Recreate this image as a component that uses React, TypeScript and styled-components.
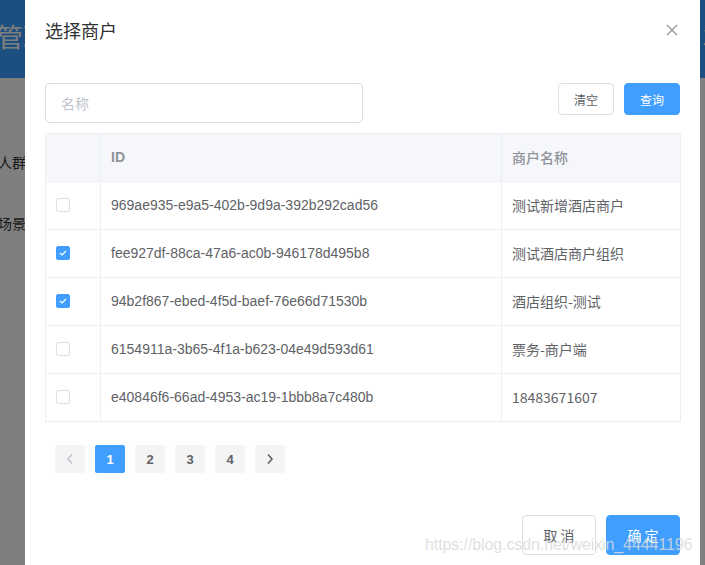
import React from "react";
import styled, { createGlobalStyle } from "styled-components";

const Global = createGlobalStyle`
  html, body { margin: 0; padding: 0; }
  body {
    width: 705px;
    height: 565px;
    overflow: hidden;
    font-family: "Liberation Sans", "Noto Sans CJK SC", sans-serif;
    background: #ffffff;
  }
  * { box-sizing: border-box; }
`;

const Page = styled.div`
  position: relative;
  width: 705px;
  height: 565px;
  overflow: hidden;
  background: #ffffff;
`;

const TopBar = styled.div`
  height: 78px;
  background: #389eff;
  display: flex;
  align-items: center;
  justify-content: space-between;
  color: #ffffff;
  font-family: "Noto Sans CJK SC", sans-serif;
`;

const BrandTitle = styled.div`
  font-size: 26px;
  margin-left: -3px;
  margin-top: -8px;
  white-space: nowrap;
`;

const TopRight = styled.div`
  font-size: 22px;
  margin-right: -9px;
  margin-top: -8px;
`;

const FormCol = styled.div`
  display: flex;
  flex-direction: column;
  gap: 41px;
  padding-top: 74px;
  width: 30px;
`;

const BgLabel = styled.div`
  font-family: "Noto Sans CJK SC", sans-serif;
  font-size: 14px;
  color: #333;
  white-space: nowrap;
  direction: rtl;
  text-align: left;
  width: 26px;
`;

const Overlay = styled.div`
  position: absolute;
  inset: 0;
  background: rgba(0, 0, 0, 0.5);
`;

const Dialog = styled.div`
  position: absolute;
  left: 25px;
  top: 0;
  width: 675px;
  height: 580px;
  background: #ffffff;
  display: flex;
  flex-direction: column;
`;

const DialogHeader = styled.div`
  position: relative;
  padding: 18px 20px 10px;
  height: 54px;
`;

const Title = styled.div`
  font-family: "Noto Sans CJK SC", sans-serif;
  font-size: 18px;
  line-height: 24px;
  color: #303133;
`;

const CloseBtn = styled.div`
  position: absolute;
  top: 24px;
  right: 22px;
  width: 12px;
  height: 12px;
  display: flex;
`;

const DialogBody = styled.div`
  padding: 29px 20px 0;
`;

const SearchRow = styled.div`
  display: flex;
  align-items: flex-start;
  justify-content: space-between;
`;

const SearchInput = styled.div`
  width: 318px;
  height: 40px;
  border: 1px solid #dcdfe6;
  border-radius: 4px;
  padding: 0 15px;
  display: flex;
  align-items: center;
  font-family: "Noto Sans CJK SC", sans-serif;
  font-size: 14px;
  color: #c0c4cc;
`;

const BtnGroup = styled.div`
  display: flex;
  gap: 10px;
`;

const Btn = styled.div<{ $primary?: boolean; $size?: "small" | "default" }>`
  height: ${(p) => (p.$size === "small" ? "32px" : "40px")};
  width: ${(p) => (p.$size === "small" ? "56px" : "74px")};
  border-radius: 4px;
  display: flex;
  align-items: center;
  justify-content: center;
  font-family: "Noto Sans CJK SC", sans-serif;
  font-size: ${(p) => (p.$size === "small" ? "12px" : "14px")};
  white-space: pre;
  border: 1px solid ${(p) => (p.$primary ? "#409eff" : "#dcdfe6")};
  background: ${(p) => (p.$primary ? "#409eff" : "#ffffff")};
  color: ${(p) => (p.$primary ? "#ffffff" : "#606266")};
`;

const Table = styled.div`
  margin-top: 10px;
  border: 1px solid #ebeef5;
  border-right: none;
  border-bottom: none;
  display: grid;
  grid-template-columns: 55px 401px 179px;
  width: 635px;
`;

const Cell = styled.div<{ $head?: boolean }>`
  height: 48px;
  border-right: 1px solid #ebeef5;
  border-bottom: 1px solid #ebeef5;
  background: ${(p) => (p.$head ? "#f5f7fa" : "#ffffff")};
  display: flex;
  align-items: center;
  padding-left: 10px;
  padding-bottom: 1px;
  font-size: 14px;
  color: ${(p) => (p.$head ? "#909399" : "#606266")};
  font-weight: ${(p) => (p.$head ? 700 : 400)};
  white-space: nowrap;
  font-family: "Liberation Sans", "Noto Sans CJK SC", sans-serif;
`;

const CnText = styled.span`
  font-family: "Noto Sans CJK SC", sans-serif;
  font-size: 14px;
`;

const HeadCn = styled.span`
  font-family: "Noto Sans CJK SC", sans-serif;
  font-weight: 500;
  font-size: 14px;
`;

const Check = styled.span<{ $checked?: boolean }>`
  width: 14px;
  height: 14px;
  border-radius: 2px;
  border: 1px solid ${(p) => (p.$checked ? "#409eff" : "#dcdfe6")};
  background: ${(p) => (p.$checked ? "#409eff" : "#ffffff")};
  display: flex;
  align-items: center;
  justify-content: center;
  margin-left: 0;
`;

const Pager = styled.div`
  display: flex;
  gap: 10px;
  padding: 23px 10px 0;
`;

const PageBtn = styled.div<{ $active?: boolean; $disabled?: boolean }>`
  width: 30px;
  height: 28px;
  border-radius: 2px;
  display: flex;
  align-items: center;
  justify-content: center;
  font-size: 13px;
  font-weight: 700;
  background: ${(p) => (p.$active ? "#409eff" : "#f4f4f5")};
  color: ${(p) => (p.$active ? "#ffffff" : p.$disabled ? "#c0c4cc" : "#606266")};
`;

const Footer = styled.div`
  display: flex;
  justify-content: flex-end;
  gap: 10px;
  padding: 42px 20px 0;
`;

const Watermark = styled.div`
  position: absolute;
  left: 425px;
  top: 536px;
  font-family: "Liberation Sans", sans-serif;
  font-size: 16px;
  color: rgba(218, 218, 218, 0.85);
  white-space: nowrap;
  letter-spacing: -0.1px;
`;

const rows = [
  { id: "969ae935-e9a5-402b-9d9a-392b292cad56", name: "测试新增酒店商户", checked: false },
  { id: "fee927df-88ca-47a6-ac0b-946178d495b8", name: "测试酒店商户组织", checked: true },
  { id: "94b2f867-ebed-4f5d-baef-76e66d71530b", name: "酒店组织-测试", checked: true },
  { id: "6154911a-3b65-4f1a-b623-04e49d593d61", name: "票务-商户端", checked: false },
  { id: "e40846f6-66ad-4953-ac19-1bbb8a7c480b", name: "18483671607", checked: false },
];

const Tick = () => (
  <svg width="8" height="6" viewBox="0 0 8 6">
    <path d="M1 3 L3.2 5 L7 1" stroke="#fff" strokeWidth="1.2" fill="none" />
  </svg>
);

const Chevron = ({ dir, color }: { dir: "l" | "r"; color: string }) => (
  <svg width="8" height="12" viewBox="0 0 8 12">
    <path
      d={dir === "l" ? "M6 1.5 L2 6 L6 10.5" : "M2 1.5 L6 6 L2 10.5"}
      stroke={color}
      strokeWidth="1.6"
      fill="none"
    />
  </svg>
);

export default function App() {
  return (
    <Page>
      <Global />
      <TopBar>
        <BrandTitle>管理平台</BrandTitle>
        <TopRight>1</TopRight>
      </TopBar>
      <FormCol>
        <BgLabel>目标人群</BgLabel>
        <BgLabel>应用场景</BgLabel>
      </FormCol>
      <Overlay />
      <Dialog>
        <DialogHeader>
          <Title>选择商户</Title>
          <CloseBtn>
            <svg width="12" height="12" viewBox="0 0 12 12">
              <path d="M1 1 L11 11 M11 1 L1 11" stroke="#909399" strokeWidth="1.2" />
            </svg>
          </CloseBtn>
        </DialogHeader>
        <DialogBody>
          <SearchRow>
            <SearchInput>名称</SearchInput>
            <BtnGroup>
              <Btn $size="small">清空</Btn>
              <Btn $size="small" $primary>
                查询
              </Btn>
            </BtnGroup>
          </SearchRow>
          <Table>
            <Cell $head />
            <Cell $head>ID</Cell>
            <Cell $head>
              <HeadCn>商户名称</HeadCn>
            </Cell>
            {rows.map((r) => (
              <React.Fragment key={r.id}>
                <Cell>
                  <Check $checked={r.checked}>{r.checked && <Tick />}</Check>
                </Cell>
                <Cell>{r.id}</Cell>
                <Cell>
                  <CnText>{r.name}</CnText>
                </Cell>
              </React.Fragment>
            ))}
          </Table>
          <Pager>
            <PageBtn $disabled>
              <Chevron dir="l" color="#c0c4cc" />
            </PageBtn>
            <PageBtn $active>1</PageBtn>
            <PageBtn>2</PageBtn>
            <PageBtn>3</PageBtn>
            <PageBtn>4</PageBtn>
            <PageBtn>
              <Chevron dir="r" color="#606266" />
            </PageBtn>
          </Pager>
        </DialogBody>
        <Footer>
          <Btn>取 消</Btn>
          <Btn $primary>确 定</Btn>
        </Footer>
      </Dialog>
      <Watermark>https://blog.csdn.net/weixin_44441196</Watermark>
    </Page>
  );
}
